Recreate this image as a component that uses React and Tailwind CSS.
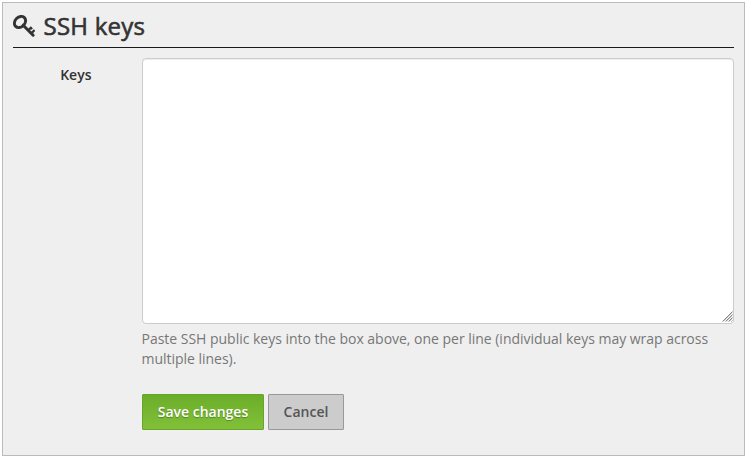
import { useState } from "react";

const KeyIcon = ({ className }) => (
  <svg className={className} viewBox="0 0 22 22" fill="none" stroke="currentColor" xmlns="http://www.w3.org/2000/svg">
    <ellipse cx="7" cy="7" rx="6.2" ry="4.9" transform="rotate(-45 7 7)" strokeWidth="2.9" />
    <path d="m10.2 10.2 9.9 10" strokeWidth="3" strokeLinecap="round" />
    <path d="m15.2 15.4 3.4-3.4M18.2 18.4l3.4-3.4M17.2 12.2l2 1.8" strokeWidth="2.2" />
  </svg>
);

const ResizeGrip = ({ className }) => (
  <svg className={className} viewBox="0 0 11 11" fill="none" xmlns="http://www.w3.org/2000/svg">
    <rect width="11" height="11" fill="#fff" />
    <path d="M.5 10.5l10-10M3.5 10.5l7-7M6.5 10.5l4-4M9.5 10.5l1-1" stroke="#888" />
    <path d="M1.5 10.5l9-9M4.5 10.5l6-6M7.5 10.5l3-3" stroke="#ccc" />
  </svg>
);

const App = () => {
  const [keys, setKeys] = useState("");

  const handleSubmit = (e) => {
    e.preventDefault();
  };

  return (
    <div className="h-screen bg-white pt-[2px] pl-[2px] pr-[3px] pb-[2px] font-['Open_Sans',sans-serif] text-sm text-[#333]">
      <form onSubmit={handleSubmit} className="h-full border border-[#bbb] bg-[#efefef] px-[10px]">
        {/* Heading */}
        <h1 className="flex h-[45px] items-center border-b border-[#1a1a1a] pt-px text-2xl font-normal tracking-[0.25px] [-webkit-text-stroke:0.6px_#333]">
          <KeyIcon className="mt-px mr-[8.5px] h-[22px] w-[22px]" />
          SSH keys
        </h1>

        {/* Keys field */}
        <div className="mt-[10px] flex">
          <label htmlFor="keys" className="w-[78.5px] pt-[7px] text-right leading-5 font-semibold">
            Keys
          </label>
          <div className="ml-[50.5px] flex-1">
            <div className="relative">
              <textarea
                id="keys"
                name="keys"
                value={keys}
                onChange={(e) => setKeys(e.target.value)}
                className="block h-[266px] w-full rounded-[4px] border border-[#ccc] bg-white px-3 py-2 shadow-[inset_0_1px_1px_rgba(0,0,0,0.075)]"
              />
              <ResizeGrip className="pointer-events-none absolute right-px bottom-[2px] h-[11px] w-[11px]" />
            </div>
            <p className="mt-[5px] -ml-[0.5px] leading-5 tracking-[-0.02px] text-[#777]">
              Paste SSH public keys into the box above, one per line (individual keys may wrap across multiple lines).
            </p>

            {/* Actions */}
            <div className="mt-[25px] flex gap-1">
              <button
                type="submit"
                className="h-9 w-[122px] rounded-[1px] border border-[#67a52a] bg-linear-to-b from-[#6bad2a] to-[#82c038] font-semibold text-white text-shadow-[0_1px_1px_rgba(0,0,0,0.3)]"
              >
                Save changes
              </button>
              <button
                type="button"
                onClick={() => setKeys("")}
                className="h-9 w-[76px] rounded-[1px] border border-[#999] bg-[#ccc] font-semibold text-[#555]"
              >
                Cancel
              </button>
            </div>
          </div>
        </div>
      </form>
    </div>
  );
};

export default App;
